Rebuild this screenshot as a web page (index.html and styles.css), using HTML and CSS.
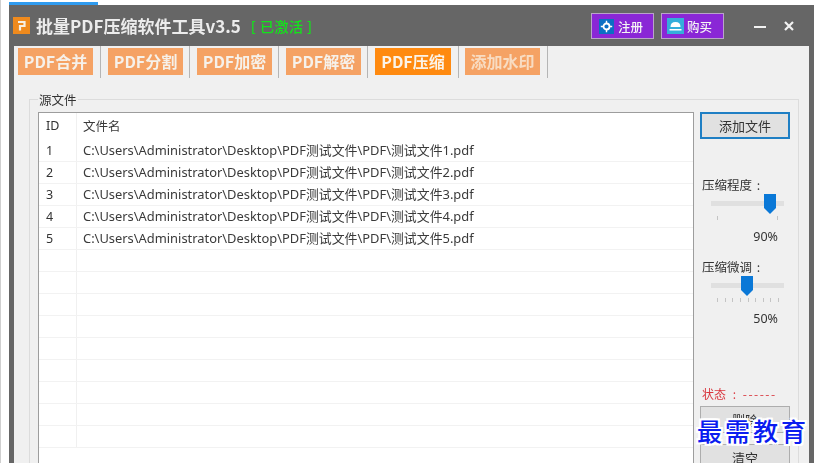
FILE: index.html
```html
<!DOCTYPE html>
<html lang="zh">
<head>
<meta charset="utf-8">
<title>批量PDF压缩软件工具</title>
<link rel="stylesheet" href="styles.css">
</head>
<body>
<div class="strip"></div>
<div class="window">
  <header class="titlebar">
    <svg class="logo" width="17" height="17" viewBox="0 0 17 17"><rect width="17" height="17" fill="#ef8a1d"/><path d="M5 5 H11.500 V9 H7 V13.500" fill="none" stroke="#f6efe3" stroke-width="2.200"/></svg>
    <span class="app-name">批量PDF压缩软件工具v3.5</span>
    <span class="activated">[ 已激活 ]</span>
    <span class="spacer"></span>
    <button class="buy-btn reg">
      <svg width="15" height="15" viewBox="0 0 15 15"><rect width="15" height="15" fill="#0b6fc4"/><circle cx="7.500" cy="7.500" r="3" fill="none" stroke="#fff" stroke-width="1.800"/><path d="M7.500 1.800 V4 M7.500 11 V13.200 M1.800 7.500 H4 M11 7.500 H13.200" stroke="#fff" stroke-width="1.400"/></svg>
      注册
    </button>
    <button class="buy-btn pay">
      <svg width="17" height="16" viewBox="0 0 17 16"><rect width="17" height="16" fill="#35aedb"/><path d="M3.500 9 Q3.500 4 8.500 4 Q13.500 4 13.500 9 Z M2.500 11 H14.500 V12.500 H2.500 Z" fill="#fff"/></svg>
      购买
    </button>
    <span class="win-min"></span>
    <svg class="win-close" width="10" height="10" viewBox="0 0 10 10"><path d="M1 1 L9 9 M9 1 L1 9" stroke="#f2f2f2" stroke-width="2.200"/></svg>
  </header>
  <div class="content">
    <nav class="tabs">
      <div class="tab-cell first-cell"><span class="tab">PDF合并</span></div>
      <div class="tab-cell"><span class="tab">PDF分割</span></div>
      <div class="tab-cell"><span class="tab">PDF加密</span></div>
      <div class="tab-cell"><span class="tab">PDF解密</span></div>
      <div class="tab-cell active-cell"><span class="tab active">PDF压缩</span></div>
      <div class="tab-cell last-cell"><span class="tab pale">添加水印</span></div>
    </nav>
    <section class="group">
      <div class="legend">源文件</div>
      <div class="group-body">
        <div class="list">
          <div class="row head"><span class="col-id">ID</span><span class="col-name">文件名</span></div>
          <div class="row"><span class="col-id">1</span><span class="col-name">C:\Users\Administrator\Desktop\PDF测试文件\PDF\测试文件1.pdf</span></div>
          <div class="row"><span class="col-id">2</span><span class="col-name">C:\Users\Administrator\Desktop\PDF测试文件\PDF\测试文件2.pdf</span></div>
          <div class="row"><span class="col-id">3</span><span class="col-name">C:\Users\Administrator\Desktop\PDF测试文件\PDF\测试文件3.pdf</span></div>
          <div class="row"><span class="col-id">4</span><span class="col-name">C:\Users\Administrator\Desktop\PDF测试文件\PDF\测试文件4.pdf</span></div>
          <div class="row"><span class="col-id">5</span><span class="col-name">C:\Users\Administrator\Desktop\PDF测试文件\PDF\测试文件5.pdf</span></div>
          <div class="row"><span class="col-id"></span><span class="col-name"></span></div>
          <div class="row"><span class="col-id"></span><span class="col-name"></span></div>
          <div class="row"><span class="col-id"></span><span class="col-name"></span></div>
          <div class="row"><span class="col-id"></span><span class="col-name"></span></div>
          <div class="row"><span class="col-id"></span><span class="col-name"></span></div>
          <div class="row"><span class="col-id"></span><span class="col-name"></span></div>
          <div class="row"><span class="col-id"></span><span class="col-name"></span></div>
          <div class="row"><span class="col-id"></span><span class="col-name"></span></div>
          <div class="row"><span class="col-id"></span><span class="col-name"></span></div>
        </div>
        <aside class="side">
          <button class="btn focus">添加文件</button>
          <div class="label first-label">压缩程度 :</div>
          <div class="slider">
            <div class="track"></div>
            <div class="ticks two"><i></i><i></i></div>
            <svg class="thumb thumb-90" width="12" height="20" viewBox="0 0 12 20"><path d="M0 0 H12 V14 L6 20 L0 14 Z" fill="#0a78d7"/></svg>
          </div>
          <div class="percent">90%</div>
          <div class="label second-label">压缩微调 :</div>
          <div class="slider">
            <div class="track"></div>
            <div class="ticks"><i></i><i></i><i></i><i></i><i></i><i></i><i></i><i></i><i></i></div>
            <svg class="thumb thumb-50" width="12" height="20" viewBox="0 0 12 20"><path d="M0 0 H12 V14 L6 20 L0 14 Z" fill="#0a78d7"/></svg>
          </div>
          <div class="percent">50%</div>
          <div class="status">状态 : <span class="dashes">------</span></div>
          <button class="btn small">删除</button>
          <button class="btn small">清空</button>
        </aside>
      </div>
    </section>
  </div>
</div>
<div class="watermark">最需教育</div>
</body>
</html>
```
FILE: styles.css
```css
* { box-sizing: border-box; }
html, body { margin: 0; height: 463px; overflow: hidden; background: #fff; }
body {
  position: relative;
  font-family: "Noto Sans CJK SC", "Noto Sans", sans-serif;
  font-size: 12px;
  color: #333;
  border-left: 1px solid #cfcfcf;
}
.strip { height: 3px; margin: 2px 0 0 8px; width: 89px; background: #2f9bef; }
.window {
  width: 805px;
  height: 458px;
  margin-left: 8px;
  background: #666;
  padding: 0 5px;
  overflow: hidden;
  filter: blur(0.35px);
}
.titlebar { height: 41px; display: flex; align-items: center; }
.logo { margin: -1px 6px 0 -1px; }
.app-name { font-size: 17px; font-weight: 700; color: #ececec; white-space: nowrap; }
.activated { color: #12e51a; font-size: 14px; font-weight: 500; letter-spacing: 0.500px; margin-left: 10px; white-space: nowrap; }
.spacer { flex: 1; }
.buy-btn {
  width: 63px; height: 26px; margin: 1px 7px 0 0;
  display: flex; align-items: center;
  background: #8a27d6; border: 1px solid #b9a3c9;
  color: #f4f4f4; font: 500 12.500px "Noto Sans CJK SC", sans-serif;
}
.buy-btn.reg { padding: 0 0 0 7px; gap: 4px; }
.buy-btn.pay { padding: 0 0 0 5px; gap: 3px; }
.win-min { width: 12px; height: 2px; background: #f2f2f2; margin: 2px 18px 0 23px; }
.win-close { margin: 0 15px 0 0; }
.content { background: #f0f0f0; height: 417px; }
.tabs { display: flex; height: 33px; }
.tab-cell {
  width: 89px; padding: 2px 0 0 7px; height: 32px;
  border-right: 1px solid #b5b5b5;
}
.tab-cell.first-cell { width: 87px; padding-left: 4px; }
.tab-cell.active-cell { width: 91px; }
.tab-cell.last-cell { padding-left: 6px; }
.tab {
  display: block; width: 75px; height: 27px; line-height: 26px;
  background: #f5a264; color: #f6f1ea; text-align: center;
  font-size: 16px; font-weight: 700; white-space: nowrap;
}
.tab.active { width: 76px; background: #ff8a10; color: #fbf3e8; }
.tab.pale { color: #f8dcc2; }
.group { margin: 20px 0 0 15px; width: 770px; height: 380px; border: 1px solid #dcdcdc; position: relative; }
.legend { position: absolute; top: -8px; left: 8px; background: #f0f0f0; padding: 0 1px; font-size: 12.500px; line-height: 15px; color: #333; }
.group-body { display: flex; padding: 12px 0 0 8px; }
.list { width: 656px; height: 368px; background: #fff; border: 1px solid #9d9d9d; border-width: 1px 1px 0; overflow: hidden; flex: none; }
.row { display: flex; height: 22px; border-bottom: 1px solid #f2f2f2; font-size: 12px; line-height: 21px; }
.row.head { height: 27px; line-height: 26px; border-bottom: 0; }
.col-id { width: 38px; padding-left: 7px; border-right: 1px solid #f0f0f0; flex: none; font-family: "Noto Sans", sans-serif; font-size: 12.500px; }
.col-name { padding-left: 6px; white-space: nowrap; font-family: "Noto Sans", "Noto Sans CJK SC", sans-serif; font-size: 12.900px; color: #3a3a3a; }
.row.head .col-name { font-family: "Noto Sans CJK SC", sans-serif; font-size: 12.500px; }
.side { width: 100px; padding-left: 6px; display: flex; flex-direction: column; flex: none; }
.btn {
  width: 90px; height: 27px; padding: 0; flex: none;
  background: #e1e1e1; border: 1px solid #adadad;
  font: 13px "Noto Sans CJK SC", sans-serif; color: #333;
}
.btn.focus { border: 2px solid #1f7fc4; }
.btn.small { margin-bottom: 11px; }
.label { font-size: 12.500px; line-height: 16px; padding-left: 2px; color: #333; word-spacing: 2px; white-space: pre; }
.first-label { margin-top: 38px; }
.second-label { margin-top: 14px; }
.slider { position: relative; height: 30px; margin: 1px 0 0 11px; width: 73px; }
.track { height: 5px; background: #e0e0e0; margin-top: 7px; }
.ticks { display: flex; justify-content: space-between; margin: 10px 5px 0 6px; height: 4px; }
.ticks i { width: 1px; height: 4px; background: #c4c4c4; }
.ticks.two { margin: 10px 6px 0 6px; }
.thumb { position: absolute; top: 0; }
.thumb-90 { left: 53px; }
.thumb-50 { left: 30px; }
.percent { font-size: 12.500px; text-align: right; padding-right: 16px; line-height: 16px; margin-top: 5px; color: #333; font-family: "Noto Sans", sans-serif; }
.status { color: #d9363e; font-size: 12px; line-height: 16px; margin-top: 59px; margin-bottom: 4px; padding-left: 2px; white-space: pre; word-spacing: 4px; }
.dashes { letter-spacing: 1.500px; }
.watermark {
  position: absolute; left: 696px; top: 416px;
  color: #0a1cf0;
  font: 500 25px/29px "Noto Sans CJK SC", serif;
  letter-spacing: 3px;
  white-space: nowrap;
  text-shadow: 2px 0 0 #fff, -2px 0 0 #fff, 0 2px 0 #fff, 0 -2px 0 #fff, 2px 2px 0 #fff, -2px 2px 0 #fff, 2px -2px 0 #fff, -2px -2px 0 #fff, 0 0 2px #fff;
}
```
